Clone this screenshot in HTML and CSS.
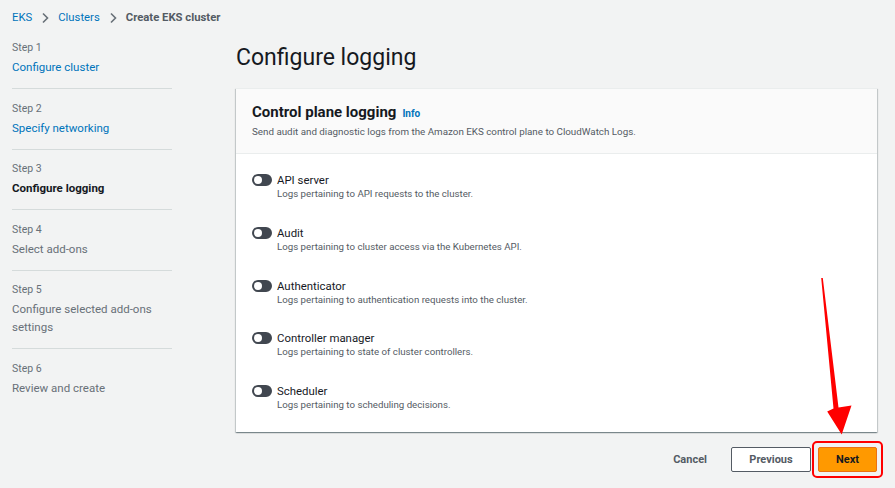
FILE: index.html
```html
<!DOCTYPE html>
<html lang="en">
<head>
<meta charset="utf-8">
<title>Create EKS cluster</title>
<link rel="stylesheet" href="styles.css">
</head>
<body>
<div class="page">
  <nav class="crumbs">
    <a class="crumb-link">EKS</a>
    <svg class="chev" viewBox="0 0 8 12" width="8" height="12"><path d="M2 1.5 L6.5 6 L2 10.5" fill="none" stroke="#687078" stroke-width="1.6"/></svg>
    <a class="crumb-link">Clusters</a>
    <svg class="chev" viewBox="0 0 8 12" width="8" height="12"><path d="M2 1.5 L6.5 6 L2 10.5" fill="none" stroke="#687078" stroke-width="1.6"/></svg>
    <span class="crumb-current">Create EKS cluster</span>
  </nav>
  <div class="layout">
    <aside class="steps">
      <div class="step"><div class="step-num">Step 1</div><div class="step-label link">Configure cluster</div></div>
      <div class="step"><div class="step-num">Step 2</div><div class="step-label link">Specify networking</div></div>
      <div class="step"><div class="step-num">Step 3</div><div class="step-label current">Configure logging</div></div>
      <div class="step"><div class="step-num">Step 4</div><div class="step-label">Select add-ons</div></div>
      <div class="step"><div class="step-num">Step 5</div><div class="step-label">Configure selected add-ons settings</div></div>
      <div class="step last"><div class="step-num">Step 6</div><div class="step-label">Review and create</div></div>
    </aside>
    <main class="main">
      <h1 class="title">Configure logging</h1>
      <section class="card">
        <header class="card-head">
          <h2 class="card-title">Control plane logging <span class="info">Info</span></h2>
          <p class="card-desc">Send audit and diagnostic logs from the Amazon EKS control plane to CloudWatch Logs.</p>
        </header>
        <div class="card-body">
          <div class="opt"><span class="toggle"></span><div><div class="opt-label">API server</div><div class="opt-desc">Logs pertaining to API requests to the cluster.</div></div></div>
          <div class="opt"><span class="toggle"></span><div><div class="opt-label">Audit</div><div class="opt-desc">Logs pertaining to cluster access via the Kubernetes API.</div></div></div>
          <div class="opt"><span class="toggle"></span><div><div class="opt-label">Authenticator</div><div class="opt-desc">Logs pertaining to authentication requests into the cluster.</div></div></div>
          <div class="opt"><span class="toggle"></span><div><div class="opt-label">Controller manager</div><div class="opt-desc">Logs pertaining to state of cluster controllers.</div></div></div>
          <div class="opt"><span class="toggle"></span><div><div class="opt-label">Scheduler</div><div class="opt-desc">Logs pertaining to scheduling decisions.</div></div></div>
        </div>
      </section>
      <div class="actions">
        <button class="btn-link">Cancel</button>
        <button class="btn-normal">Previous</button>
        <span class="highlight"><button class="btn-primary">Next</button></span>
      </div>
    </main>
  </div>
  <svg class="arrow" viewBox="0 0 895 488" width="895" height="488">
    <polygon points="821.2,278 822.8,278 838.5,407.5 851.5,405.5 841.7,434.5 827.2,411.5 833.5,408.5" fill="#ff0000"/>
  </svg>
</div>
</body>
</html>
```
FILE: styles.css
```css
* { box-sizing: border-box; }
html, body { margin: 0; padding: 0; }
body {
  background: #f2f3f3;
  font-family: Roboto, "Noto Sans", "Liberation Sans", sans-serif;
  color: #16191f;
  width: 895px;
  height: 488px;
  overflow: hidden;
}
.page {
  position: relative;
  padding: 10px 18px 0 12px;
  height: 488px;
}
.crumbs {
  display: flex;
  align-items: center;
  gap: 9px;
  font-size: 11.3px;
  line-height: 16px;
  height: 16px;
}
.crumb-link { color: #0073bb; }
.crumb-current { color: #545b64; font-weight: 700; }
.chev { display: block; }
.layout {
  display: grid;
  grid-template-columns: 160px 1fr;
  column-gap: 64px;
  margin-top: 14px;
}
.step {
  padding: 0 0 12px;
  border-bottom: 1px solid #d5dbdb;
  margin-bottom: 11.5px;
}
.step.last { border-bottom: none; }
.step-num {
  font-size: 10.5px;
  line-height: 16px;
  color: #687078;
}
.step-label {
  margin-top: 2px;
  font-size: 11.5px;
  line-height: 18px;
  color: #687078;
}
.step-label.link { color: #0073bb; }
.step-label.current { color: #16191f; font-weight: 700; }
.main { min-width: 0; }
.title {
  margin: 4px 0 0;
  font-size: 23px;
  line-height: 28px;
  font-weight: 400;
  color: #16191f;
}
.card {
  margin-top: 16px;
  background: #fff;
  border-top: 1px solid #eaeded;
  box-shadow: 0 1px 1px 0 rgba(0, 28, 36, 0.3), 1px 1px 1px 0 rgba(0, 28, 36, 0.15), -1px 1px 1px 0 rgba(0, 28, 36, 0.15);
}
.card-head {
  background: #fafafa;
  border-bottom: 1px solid #eaeded;
  padding: 13px 16px 14px;
}
.card-title {
  margin: 0;
  font-size: 15px;
  line-height: 20px;
  font-weight: 700;
  display: flex;
  align-items: baseline;
  gap: 6px;
}
.info {
  color: #0073bb;
  font-size: 10px;
  font-weight: 700;
}
.card-desc {
  margin: 1px 0 0;
  font-size: 9.8px;
  line-height: 14px;
  color: #545b64;
}
.card-body {
  padding: 18px 16px 20px;
  display: flex;
  flex-direction: column;
  gap: 23.8px;
}
.opt {
  display: flex;
  align-items: flex-start;
  gap: 5px;
}
.toggle {
  flex: none;
  width: 20px;
  height: 12px;
  margin-top: 2px;
  border-radius: 6px;
  background: #414750;
  position: relative;
}
.toggle::after {
  content: "";
  position: absolute;
  left: 2px;
  top: 2px;
  width: 8px;
  height: 8px;
  border-radius: 50%;
  background: #fff;
}
.opt-label {
  font-size: 11.4px;
  line-height: 16px;
  color: #16191f;
}
.opt-desc {
  margin-top: -1px;
  font-size: 9.7px;
  line-height: 14px;
  color: #545b64;
}
.actions {
  display: flex;
  justify-content: flex-end;
  align-items: center;
  margin-top: 9px;
  margin-right: -6px;
}
button {
  font-family: inherit;
  font-size: 11px;
  font-weight: 700;
  cursor: pointer;
}
.btn-link {
  background: none;
  border: none;
  color: #545b64;
  padding: 0;
  margin-right: 24px;
}
.btn-normal {
  height: 25px;
  width: 80px;
  background: #fff;
  border: 1px solid #545b64;
  border-radius: 2px;
  color: #545b64;
  padding: 0;
}
.highlight {
  display: block;
  margin-left: 1px;
  border: 2px solid #ff0000;
  border-radius: 5px;
  padding: 4px;
}
.btn-primary {
  display: block;
  height: 25px;
  width: 59px;
  background: #ff9900;
  border: 1px solid #ec7211;
  border-radius: 2px;
  color: #16191f;
  padding: 0;
}
.arrow {
  position: absolute;
  left: 0;
  top: 0;
  pointer-events: none;
}
```
